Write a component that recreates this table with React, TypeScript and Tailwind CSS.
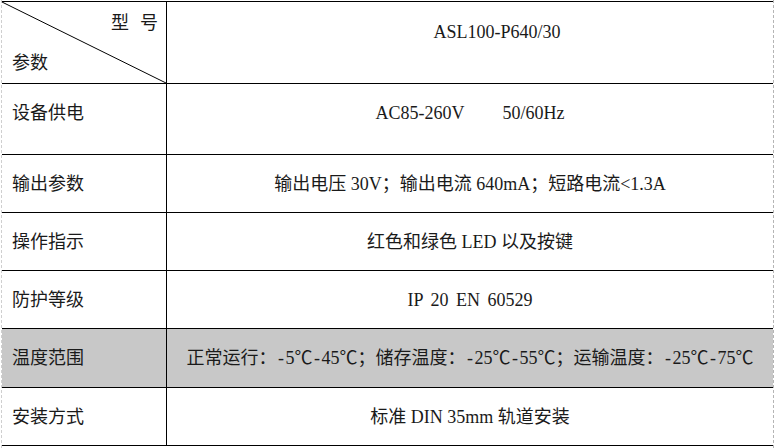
import React from 'react';

type Row = {
  label: string;
  value: React.ReactNode;
  h: string;
  shaded?: boolean;
  pb?: string;
};

// ℃ takes a full-width cell and "-" a half-width one, as in the original font
const withDegrees = (s: string) =>
  s.split(/(℃|-)/).map((part, i) => {
    if (part === '℃') return <span key={i} className="inline-block w-[18px] text-center">℃</span>;
    if (part === '-') return <span key={i} className="inline-block w-[9px] text-center">-</span>;
    return <React.Fragment key={i}>{part}</React.Fragment>;
  });

const rows: Row[] = [
  {
    label: '设备供电',
    value: (
      <>
        AC85-260V<span className="ml-[38px]">50/60Hz</span>
      </>
    ),
    h: 'h-[71px]',
    pb: 'pb-[12px]',
  },
  { label: '输出参数', value: '输出电压 30V；输出电流 640mA；短路电流<1.3A', h: 'h-[58px]' },
  { label: '操作指示', value: '红色和绿色 LED 以及按键', h: 'h-[58px]' },
  { label: '防护等级', value: <span className="[word-spacing:3px]">IP 20 EN 60529</span>, h: 'h-[58px]' },
  {
    label: '温度范围',
    value: withDegrees('正常运行：-5℃-45℃；储存温度：-25℃-55℃；运输温度：-25℃-75℃'),
    h: 'h-[59px]',
    shaded: true,
  },
  { label: '安装方式', value: '标准 DIN 35mm 轨道安装', h: 'h-[59px]' },
];

export default function App() {
  return (
    <div
      className="w-[777px] h-[448px] bg-white overflow-hidden text-[18px] leading-none text-[#1a1a1a]"
      style={{ fontFamily: '"Liberation Serif", "Noto Sans CJK SC", serif' }}
    >
      <div className="ml-px w-[773px] h-[448px] pt-px border-l border-r border-dashed border-l-[#cfcfcf] border-r-[#b5b5b5]">
        {/* header row */}
        <div className="flex h-[82px] border-t border-black">
          <div className="relative w-[165px] shrink-0 border-r border-black">
            <svg className="absolute inset-0 w-full h-full" preserveAspectRatio="none" viewBox="0 0 100 100">
              <line x1="0" y1="0" x2="100" y2="100" stroke="#000" strokeWidth="1" vectorEffect="non-scaling-stroke" />
            </svg>
            <div className="flex justify-end gap-[11px] pr-[8px] pt-[12px]">
              <span>型</span>
              <span>号</span>
            </div>
            <div className="pl-[10px] pt-[22px]">参数</div>
          </div>
          <div className="flex-1 flex justify-center pt-[21px] pl-[54px]">ASL100-P640/30</div>
        </div>

        {rows.map((r, i) => (
          <div
            key={r.label}
            className={`flex border-t border-black ${r.h} ${r.shaded ? 'bg-[#c8c8c8]' : ''} ${
              i === rows.length - 1 ? 'border-b' : ''
            }`}
          >
            <div className={`w-[165px] shrink-0 border-r border-black flex items-center pl-[10px] ${r.pb ?? ''}`}>
              {r.label}
            </div>
            <div className={`flex-1 flex items-center justify-center whitespace-nowrap ${r.pb ?? ''}`}>{r.value}</div>
          </div>
        ))}
      </div>
    </div>
  );
}
